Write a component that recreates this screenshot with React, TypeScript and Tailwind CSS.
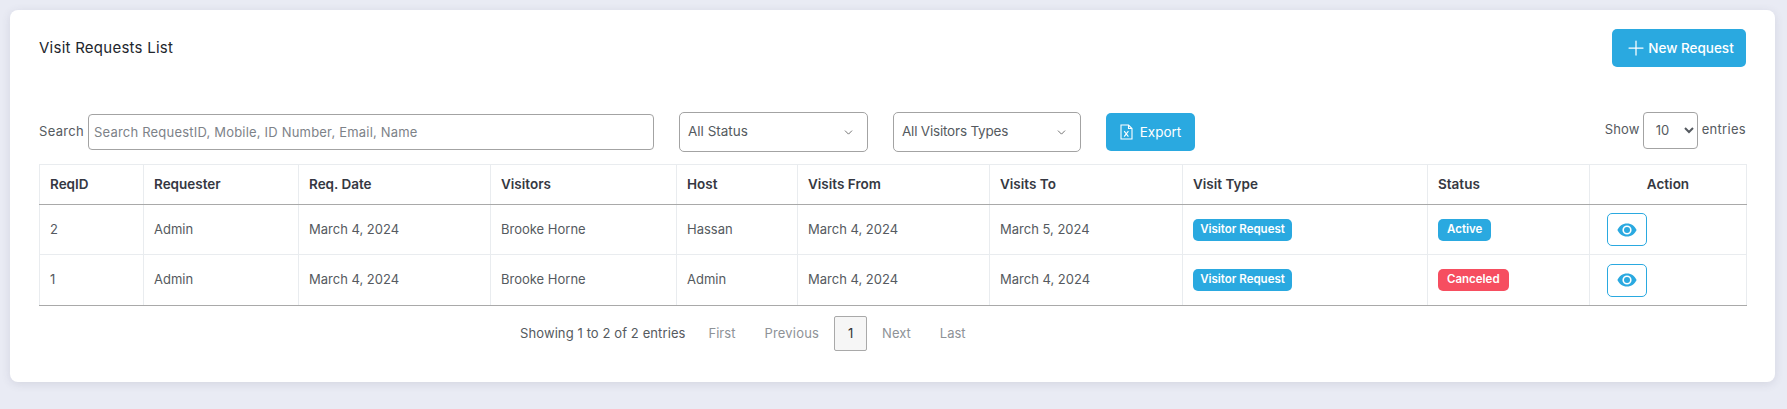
import React from "react";
import { ChevronDown, Plus } from "lucide-react";

const widths = [104, 155, 192, 186, 121, 192, 193, 245, 162, 157];
const heads = ["ReqID", "Requester", "Req. Date", "Visitors", "Host", "Visits From", "Visits To", "Visit Type", "Status", "Action"];
const rows = [
  { id: "2", host: "Hassan", to: "March 5, 2024", status: "Active", cls: "bg-[#2aa9e0] px-[9px]", h: "h-[50px]" },
  { id: "1", host: "Admin", to: "March 4, 2024", status: "Canceled", cls: "bg-[#f64e60] px-[9px]", h: "h-[51px]" },
];

function Eye() {
  return (
    <svg width="20" height="14" viewBox="0 0 20 14" fill="none">
      <path fillRule="evenodd" clipRule="evenodd" d="M10 0.5C5.6 0.5 2 3.2 0.4 7 2 10.8 5.6 13.5 10 13.5S18 10.8 19.6 7C18 3.2 14.4 0.5 10 0.5ZM10 11.6A4.6 4.6 0 1 1 10 2.4 4.6 4.6 0 0 1 10 11.6Z" fill="#2aa9e0" />
      <path fillRule="evenodd" clipRule="evenodd" d="M10 4A3 3 0 1 0 13 7 3 3 0 0 0 10 4Z" fill="#2aa9e0" />
    </svg>
  );
}

function Excel() {
  return (
    <svg width="13" height="16" viewBox="0 0 13 16" fill="none" stroke="white" strokeWidth="1.1">
      <path d="M1 1h7.5L12 4.5V15H1Z" />
      <path d="M8.5 1v3.5H12" />
      <path d="M4.2 7.2l4.2 5.4M8.4 7.2l-4.2 5.4" />
    </svg>
  );
}

function Pick({ label, w, ml, track }: { label: string; w: string; ml: string; track: string }) {
  return (
    <div className={`${w} ${ml} h-[40px] rounded-[5px] border border-[#a3a3a3] flex items-center justify-between pl-[8px] pr-[12px] text-[13.5px] text-[#555a60]`}>
      <span className={`-mt-[1px] ${track}`}>{label}</span>
      <ChevronDown size={13} strokeWidth={1.5} className="text-[#555]" />
    </div>
  );
}

export default function App() {
  return (
    <div className="min-h-[409px] bg-[#e9ebf4] pt-[10px] pl-[10px] pr-[12px] font-['Inter','Liberation_Sans',sans-serif]">
      <div className="h-[372px] bg-white rounded-[8px] shadow-[0_2px_10px_rgba(60,60,90,0.12)] pl-[29px] pr-[29px] pt-[19px] text-[#555a60]">
        <div className="flex justify-between items-start h-[83px]">
          <h1 className="mt-[9px] text-[15px] leading-[20px] tracking-[0.25px] text-[#22262c]">Visit Requests List</h1>
          <button className="w-[134px] h-[38px] rounded-[5px] bg-[#2aa9e0] text-white text-[13.5px] font-medium flex items-center justify-center">
            <Plus size={24} strokeWidth={1.25} />
            New Request
          </button>
        </div>

        <div className="flex items-center h-[40px] relative">
          <span className="w-[49px] text-[13px] tracking-[0.3px]">Search</span>
          <input
            placeholder="Search RequestID, Mobile, ID Number, Email, Name"
            className="w-[566px] h-[36px] rounded-[4px] border border-[#a3a3a3] px-[5px] text-[13px] tracking-[0.2px] placeholder:text-[#7d8288] outline-none"
          />
          <Pick label="All Status" w="w-[189px]" ml="ml-[25px]" track="" />
          <Pick label="All Visitors Types" w="w-[188px]" ml="ml-[25px]" track="tracking-[-0.2px]" />
          <button className="ml-[25px] w-[89px] h-[38px] rounded-[5px] bg-[#2aa9e0] text-white text-[13.5px] flex items-center justify-center gap-[7px]">
            <Excel />
            Export
          </button>
          <div className="ml-auto flex items-center gap-[3px] text-[13px] -mt-[4px]">
            <span className="tracking-[0.2px]">Show</span>
            <select className="w-[55px] h-[37px] rounded-[4px] border border-[#a3a3a3] bg-white pl-[8px] text-[13px] text-[#555a60]" defaultValue="10">
              <option>10</option>
            </select>
            <span className="ml-[1px] tracking-[0.3px]">entries</span>
          </div>
        </div>

        <table className="mt-[12px] w-[1707px] table-fixed border-collapse text-[13px]">
          <colgroup>
            {widths.map((w, i) => (
              <col key={i} style={{ width: w }} />
            ))}
          </colgroup>
          <thead>
            <tr className="h-[40px]">
              {heads.map((h, i) => (
                <th key={h} className={`border border-[#e9ecef] border-b-[#a9a9a9] px-[10px] text-[13.5px] font-semibold text-[#353842] ${i === 9 ? "text-center" : "text-left"}`}>
                  {h}
                </th>
              ))}
            </tr>
          </thead>
          <tbody>
            {rows.map((r, idx) => (
              <tr key={r.id} className={r.h}>
                {[r.id, "Admin", "March 4, 2024", "Brooke Horne", r.host, "March 4, 2024", r.to].map((t, i) => (
                  <td key={i} className={`border border-[#e9ecef] px-[10px] ${idx === 1 ? "border-b-[#a9a9a9]" : ""}`}>{t}</td>
                ))}
                <td className={`border border-[#e9ecef] px-[10px] ${idx === 1 ? "border-b-[#a9a9a9]" : ""}`}>
                  <span className="inline-flex items-center justify-center w-[99px] h-[22px] rounded-[5px] bg-[#2aa9e0] text-white text-[11.5px] font-semibold">Visitor Request</span>
                </td>
                <td className={`border border-[#e9ecef] px-[10px] ${idx === 1 ? "border-b-[#a9a9a9]" : ""}`}>
                  <span className={`inline-flex items-center justify-center h-[22px] rounded-[5px] text-white text-[11.5px] font-semibold ${r.cls}`}>{r.status}</span>
                </td>
                <td className={`border border-[#e9ecef] pl-[17px] ${idx === 1 ? "border-b-[#a9a9a9]" : ""}`}>
                  <span className="flex items-center justify-center w-[40px] h-[33px] rounded-[5px] border border-[#2aa9e0]">
                    <Eye />
                  </span>
                </td>
              </tr>
            ))}
          </tbody>
        </table>

        <div className="mt-[10px] ml-[481px] flex items-center text-[13px]">
          <span className="tracking-[0.1px]">Showing 1 to 2 of 2 entries</span>
          <span className="ml-[23px] text-[#8e9297]">First</span>
          <span className="ml-[29px] text-[#8e9297] tracking-[0.2px]">Previous</span>
          <span className="ml-[15px] w-[33px] h-[35px] flex items-center justify-center rounded-[2px] border border-[#a9a9a9] bg-[#f6f6f6] text-[#333]">1</span>
          <span className="ml-[15px] text-[#8e9297]">Next</span>
          <span className="ml-[29px] text-[#8e9297]">Last</span>
        </div>
      </div>
    </div>
  );
}
